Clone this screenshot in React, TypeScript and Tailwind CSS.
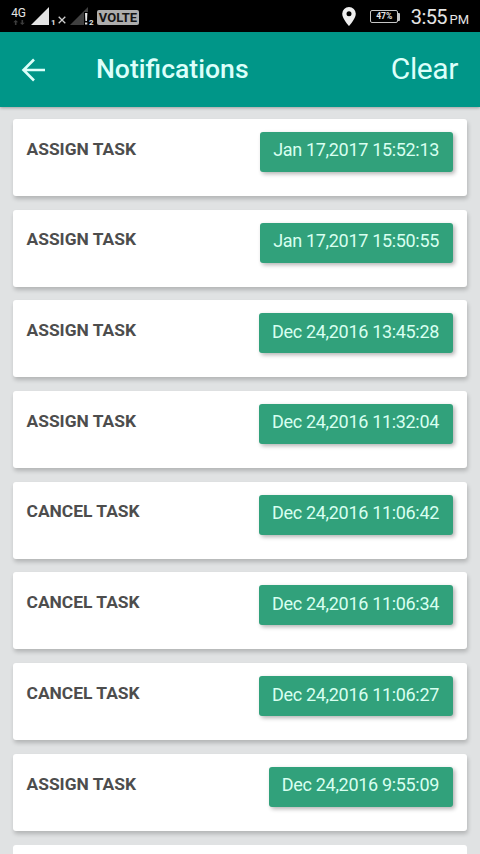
const notifications = [
  { title: 'ASSIGN TASK', time: 'Jan 17,2017 15:52:13' },
  { title: 'ASSIGN TASK', time: 'Jan 17,2017 15:50:55' },
  { title: 'ASSIGN TASK', time: 'Dec 24,2016 13:45:28' },
  { title: 'ASSIGN TASK', time: 'Dec 24,2016 11:32:04' },
  { title: 'CANCEL TASK', time: 'Dec 24,2016 11:06:42' },
  { title: 'CANCEL TASK', time: 'Dec 24,2016 11:06:34' },
  { title: 'CANCEL TASK', time: 'Dec 24,2016 11:06:27' },
  { title: 'ASSIGN TASK', time: 'Dec 24,2016 9:55:09' },
];

function StatusBar() {
  return (
    <div className="flex h-8 shrink-0 items-start justify-between bg-black px-[11px] text-[#e4e4e4]">
      <div className="flex h-8 items-start">
        <div className="flex w-[15px] flex-col items-center pt-[7px]">
          <span className="text-[12px] leading-[12px] tracking-[-0.3px]">4G</span>
          <svg className="mt-px h-[5px] w-[12px]" viewBox="0 0 12 5" fill="#3d3d3d">
            <path d="M2.7 0 5.2 2.3H3.5V5H1.9V2.3H.2zM9.3 5 6.8 2.7h1.7V0h1.6v2.7h1.7z" />
          </svg>
        </div>
        <svg className="ml-[5px] mt-[7px] h-[18px] w-[18px]" viewBox="0 0 18 18" fill="#e4e4e4">
          <path d="M18 0v18H0z" />
        </svg>
        <span className="ml-[2px] mt-[18px] w-[5px] text-[8px] font-bold leading-[9px]">1</span>
        <svg className="ml-[2px] mt-[16px] h-[8px] w-[8px]" viewBox="0 0 8 8" stroke="#cfcfcf" strokeWidth="1.3">
          <path d="m.7.7 6.6 6.6M7.3.7.7 7.3" />
        </svg>
        <svg className="ml-[4px] mt-[7px] h-[18px] w-[19px]" viewBox="0 0 19 18">
          <path d="M18 0v18H0z" fill="#404040" />
          <path d="M14 5h4v13h-4z" fill="#000" />
          <path d="M15 6h2.4l-.4 8h-1.6zM15 15.4h2.3v2.2H15z" fill="#e4e4e4" />
        </svg>
        <span className="mt-[18px] w-[5px] text-[8px] font-bold leading-[9px]">2</span>
        <span className="ml-[3px] mt-[10px] flex h-[15px] w-[42px] items-center justify-center rounded-[2px] bg-[#adadad] text-[13px] font-bold leading-none text-[#151515]">
          VOLTE
        </span>
      </div>
      <div className="flex h-8 items-start">
        <svg className="mt-[7px] h-[19px] w-[14px]" viewBox="0 0 14 19">
          <path
            d="M7 0a6.8 6.8 0 0 0-6.8 6.8C.2 11.8 7 19 7 19s6.8-7.2 6.8-12.2A6.8 6.8 0 0 0 7 0zm0 4.3a2.5 2.5 0 1 1 0 5 2.5 2.5 0 0 1 0-5z"
            fill="#eeeeee"
          />
        </svg>
        <div className="ml-[14px] mt-[10px] flex items-center">
          <span className="flex h-[13px] w-[28px] items-center justify-center rounded-[2px] border border-[#c6c6c6] text-[8.5px] font-bold leading-none">
            47%
          </span>
          <span className="h-[8px] w-[2px] rounded-r-[1px] bg-[#c6c6c6]" />
        </div>
        <div className="ml-[10.5px] flex items-baseline">
          <span className="text-[20px] leading-[35px] tracking-[-0.6px]">3:55</span>
          <span className="ml-[2.5px] text-[13px]">PM</span>
        </div>
      </div>
    </div>
  );
}

function AppBar() {
  return (
    <header className="relative flex h-[75px] shrink-0 items-center bg-[#009688] pl-[21px] pr-[22px] text-[#dcfffa] shadow-[0_1px_3px_rgba(0,0,0,0.3)]">
      <svg className="h-[24px] w-[24px]" viewBox="0 0 24 24" fill="none" stroke="currentColor" strokeWidth="2.6">
        <path d="M24 12H2.5M13 1.5 2.5 12 13 22.5" />
      </svg>
      <h1 className="ml-[51px] text-[26.6px] font-medium leading-none">Notifications</h1>
      <button className="mb-[2px] ml-auto text-[30px] leading-none tracking-[-0.4px]">Clear</button>
    </header>
  );
}

function NotificationCard({ title, time }: { title: string; time: string }) {
  return (
    <li className="flex h-[77px] shrink-0 items-start justify-between rounded-[3px] bg-white pl-[13.5px] pr-[14px] pt-[13px] shadow-[1px_3px_4px_rgba(0,0,0,0.2)]">
      <span className="mt-[6.7px] text-[17.4px] font-bold leading-5 text-[#4d4d4d]">{title}</span>
      <span className="h-10 rounded-[3px] bg-[#31a17b] pl-[13px] pr-[14px] pt-[8.4px] text-[18px] leading-5 tracking-[-0.32px] text-[#d8fff0] shadow-[2px_2px_4px_rgba(0,0,0,0.3)]">
        {time}
      </span>
    </li>
  );
}

export default function App() {
  return (
    <div className="flex h-[854px] w-[480px] flex-col overflow-hidden bg-[#e0e2e3] font-[Roboto,sans-serif]">
      <StatusBar />
      <AppBar />
      <ul className="flex min-h-0 flex-1 flex-col gap-[13.7px] overflow-hidden px-[13px] pt-[12px]">
        {notifications.map((item) => (
          <NotificationCard key={item.time} title={item.title} time={item.time} />
        ))}
        <li className="h-[77px] shrink-0 rounded-[3px] bg-white" />
      </ul>
    </div>
  );
}
